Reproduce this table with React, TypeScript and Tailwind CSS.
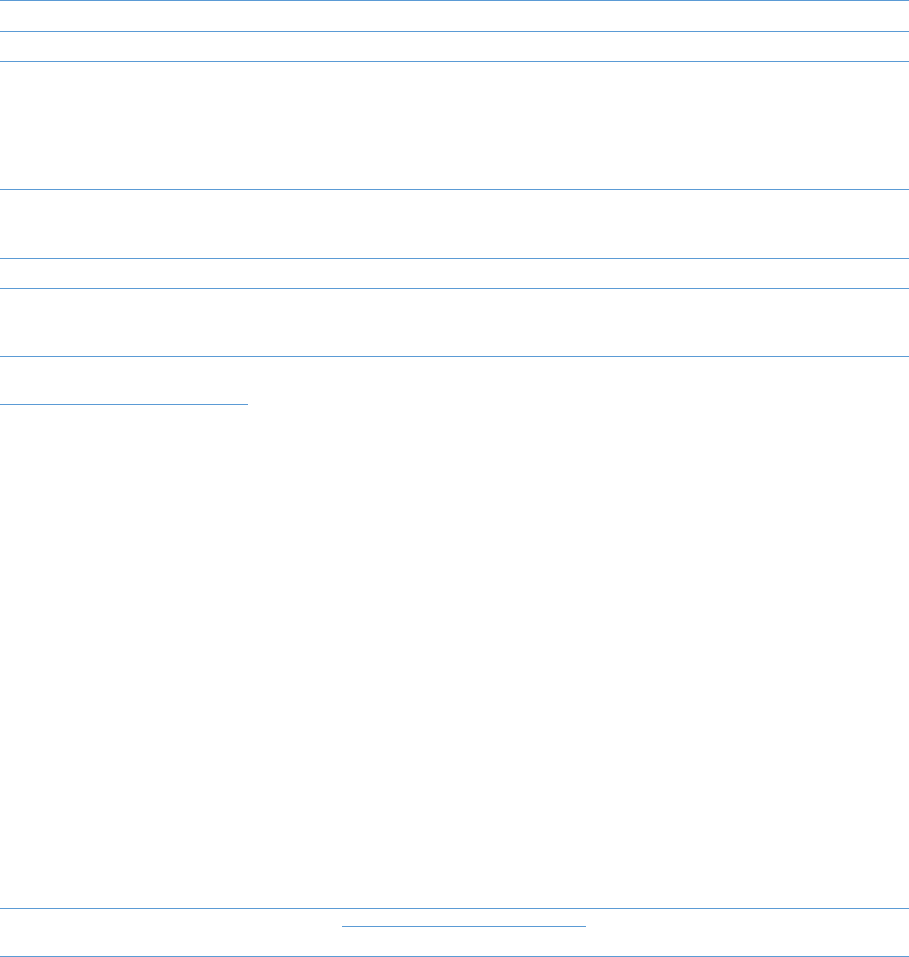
export default function App() {
  return (
    <div className="w-[909px] h-[957px] bg-white flex flex-col">
      <div className="h-[31px] border-t border-[#5b9bd5]" />
      <div className="h-[30px] border-t border-[#5b9bd5]" />
      <div className="h-[128px] border-t border-[#5b9bd5]" />
      <div className="h-[69px] border-t border-[#5b9bd5]" />
      <div className="h-[30px] border-t border-[#5b9bd5]" />
      <div className="h-[68px] border-t border-[#5b9bd5]" />
      <div className="h-[552px] border-t border-[#5b9bd5]">
        <div className="mt-[47px] h-px w-[248px] bg-[#5b9bd5]" />
      </div>
      <div className="h-[49px] border-t border-b border-[#5b9bd5]">
        <div className="mt-[17px] ml-[342px] h-px w-[244px] bg-[#5b9bd5]" />
      </div>
    </div>
  );
}
